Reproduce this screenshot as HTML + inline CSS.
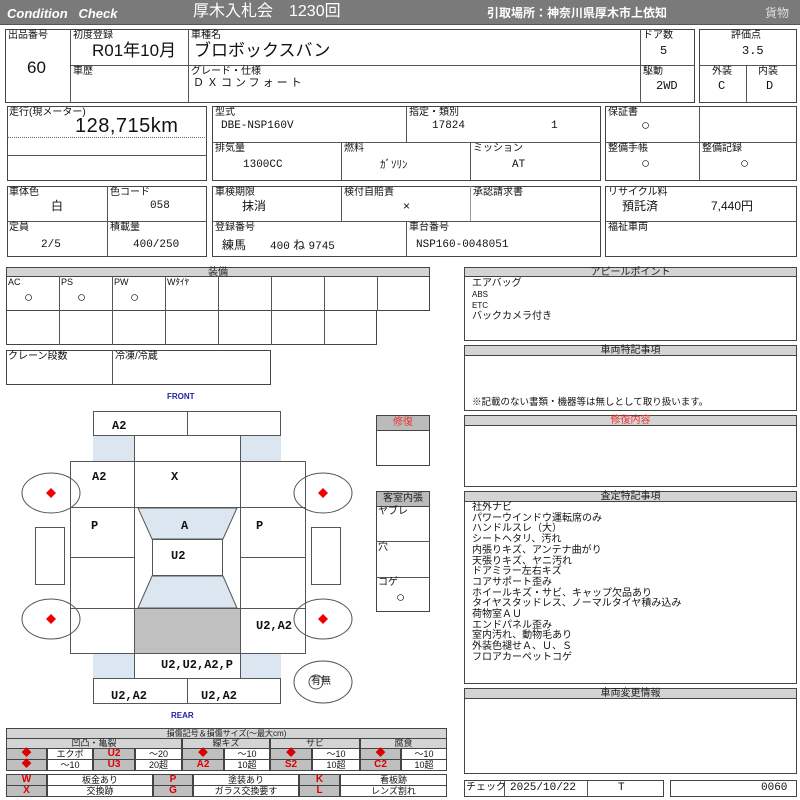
<!DOCTYPE html>
<html><head><meta charset="utf-8"><style>
*{margin:0;padding:0;box-sizing:border-box}
body{width:800px;height:800px;background:#fff;position:relative;overflow:hidden;font-family:"Liberation Sans","Noto Sans CJK JP",sans-serif;color:#111}
.b{position:absolute;border:1px solid #444}
.l{position:absolute;background:#555}
.t{position:absolute;font-size:10px;white-space:nowrap;line-height:1}
.v{position:absolute;font-size:12px;white-space:nowrap;line-height:1;font-family:"Liberation Mono","Noto Sans CJK JP",monospace}
.h{position:absolute;background:#d4d4d4;border:1px solid #444;font-size:10px;text-align:center;line-height:9px;color:#222}
.blue{position:absolute;background:#dce6f0}
.g{position:absolute;background:#bfbfbf;border:1px solid #444;color:#d00;font-weight:bold;font-size:10px;text-align:center;line-height:10px}
.w{position:absolute;border:1px solid #444;font-size:9px;text-align:center;line-height:10px}
.m{font-family:"Liberation Mono",monospace;font-weight:bold;font-size:12px}
.c{font-size:15px}
</style></head><body>
<div style="position:absolute;left:0;top:0;width:800px;height:25px;background:#7a7a7a;border-bottom:1px solid #555"></div>
<div class="t" style="left:7px;top:7px;color:#fff;font-style:italic;font-weight:bold;font-size:13px">Condition&nbsp;&nbsp;&nbsp;Check</div>
<div class="t" style="left:193px;top:4px;color:#fff;font-size:16px">厚木入札会　1230回</div>
<div class="t" style="left:487px;top:7px;color:#fff;font-size:12px;font-weight:bold">引取場所：神奈川県厚木市上依知</div>
<div class="t" style="left:765px;top:7px;color:#ddd;font-size:12px">貨物</div>

<div class="b" style="left:5px;top:29px;width:690px;height:74px"></div>
<div class="l" style="left:70px;top:29px;width:1px;height:74px"></div>
<div class="l" style="left:188px;top:29px;width:1px;height:74px"></div>
<div class="l" style="left:640px;top:29px;width:1px;height:74px"></div>
<div class="l" style="left:70px;top:65px;width:625px;height:1px"></div>
<div class="t" style="left:8px;top:31px">出品番号</div>
<div class="t" style="left:27px;top:59px;font-size:17px">60</div>
<div class="t" style="left:92px;top:42px;font-size:17px">R01年10月</div>
<div class="t" style="left:73px;top:31px">初度登録</div>
<div class="t" style="left:73px;top:67px">車歴</div>
<div class="t" style="left:191px;top:31px">車種名</div>
<div class="t" style="left:194px;top:42px;font-size:17px">ブロボックスバン</div>
<div class="t" style="left:191px;top:67px">グレード・仕様</div>
<div class="t" style="left:193px;top:78px;font-size:11px;letter-spacing:3px">ＤＸコンフォート</div>
<div class="t" style="left:643px;top:31px">ドア数</div>
<div class="v" style="left:660px;top:45px">5</div>
<div class="t" style="left:643px;top:67px">駆動</div>
<div class="v" style="left:656px;top:80px">2WD</div>
<div class="b" style="left:699px;top:29px;width:98px;height:74px"></div>
<div class="l" style="left:699px;top:65px;width:98px;height:1px"></div>
<div class="l" style="left:746px;top:65px;width:1px;height:38px"></div>
<div class="t" style="left:731px;top:31px">評価点</div>
<div class="v" style="left:742px;top:45px">3.5</div>
<div class="t" style="left:712px;top:67px">外装</div>
<div class="t" style="left:758px;top:67px">内装</div>
<div class="v" style="left:718px;top:80px">C</div>
<div class="v" style="left:766px;top:80px">D</div>

<div class="b" style="left:7px;top:106px;width:200px;height:75px"></div>
<div style="position:absolute;left:7px;top:137px;width:200px;border-top:1px dotted #666"></div>
<div class="l" style="left:7px;top:155px;width:200px;height:1px"></div>
<div class="t" style="left:9px;top:108px">走行(現メーター)</div>
<div class="t" style="left:75px;top:116px;font-size:20px;letter-spacing:0.5px">128,715km</div>
<div class="b" style="left:212px;top:106px;width:389px;height:75px"></div>
<div class="l" style="left:212px;top:142px;width:389px;height:1px"></div>
<div class="l" style="left:406px;top:106px;width:1px;height:36px"></div>
<div class="l" style="left:341px;top:142px;width:1px;height:39px"></div>
<div class="l" style="left:470px;top:142px;width:1px;height:39px"></div>
<div class="t" style="left:215px;top:108px">型式</div>
<div class="v" style="left:221px;top:121px;font-size:11px">DBE-NSP160V</div>
<div class="t" style="left:409px;top:108px">指定・類別</div>
<div class="v" style="left:432px;top:121px;font-size:11px">17824</div>
<div class="v" style="left:551px;top:121px;font-size:11px">1</div>
<div class="t" style="left:215px;top:144px">排気量</div>
<div class="v" style="left:243px;top:160px;font-size:11px">1300CC</div>
<div class="t" style="left:344px;top:144px">燃料</div>
<div class="t" style="left:380px;top:160px;font-size:11px">ｶﾞｿﾘﾝ</div>
<div class="t" style="left:473px;top:144px">ミッション</div>
<div class="v" style="left:512px;top:160px;font-size:11px">AT</div>
<div class="b" style="left:605px;top:106px;width:192px;height:75px"></div>
<div class="l" style="left:699px;top:106px;width:1px;height:75px"></div>
<div class="l" style="left:605px;top:142px;width:192px;height:1px"></div>
<div class="t" style="left:608px;top:108px">保証書</div>
<div class="t c" style="left:641px;top:118px">○</div>
<div class="t" style="left:608px;top:144px">整備手帳</div>
<div class="t c" style="left:641px;top:156px">○</div>
<div class="t" style="left:702px;top:144px">整備記録</div>
<div class="t c" style="left:740px;top:156px">○</div>

<div class="b" style="left:7px;top:186px;width:200px;height:71px"></div>
<div class="l" style="left:107px;top:186px;width:1px;height:71px"></div>
<div class="l" style="left:7px;top:221px;width:200px;height:1px"></div>
<div class="t" style="left:9px;top:188px">車体色</div>
<div class="t" style="left:51px;top:200px;font-size:12px">白</div>
<div class="t" style="left:110px;top:188px">色コード</div>
<div class="v" style="left:150px;top:201px;font-size:11px">058</div>
<div class="t" style="left:9px;top:223px">定員</div>
<div class="v" style="left:41px;top:240px;font-size:11px">2/5</div>
<div class="t" style="left:110px;top:223px">積載量</div>
<div class="v" style="left:133px;top:240px;font-size:11px">400/250</div>
<div class="b" style="left:212px;top:186px;width:389px;height:71px"></div>
<div class="l" style="left:212px;top:221px;width:389px;height:1px"></div>
<div class="l" style="left:341px;top:186px;width:1px;height:35px"></div>
<div class="l" style="left:470px;top:186px;width:1px;height:35px;background:#999"></div>
<div class="l" style="left:406px;top:221px;width:1px;height:36px"></div>
<div class="t" style="left:215px;top:188px">車検期限</div>
<div class="t" style="left:242px;top:200px;font-size:12px">抹消</div>
<div class="t" style="left:344px;top:188px">検付自賠責</div>
<div class="t" style="left:403px;top:200px;font-size:12px">×</div>
<div class="t" style="left:473px;top:188px">承認請求書</div>
<div class="t" style="left:215px;top:223px">登録番号</div>
<div class="t" style="left:222px;top:239px;font-size:12px">練馬　　<span style="font-size:11px;font-family:'Liberation Mono',monospace">400</span> ね <span style="font-size:11px;font-family:'Liberation Mono',monospace">9745</span></div>
<div class="t" style="left:409px;top:223px">車台番号</div>
<div class="v" style="left:416px;top:240px;font-size:11px">NSP160-0048051</div>
<div class="b" style="left:605px;top:186px;width:192px;height:71px"></div>
<div class="l" style="left:605px;top:221px;width:192px;height:1px"></div>
<div class="t" style="left:608px;top:188px">リサイクル料</div>
<div class="t" style="left:622px;top:200px;font-size:12px">預託済</div>
<div class="t" style="left:711px;top:200px;font-size:12px">7,440円</div>
<div class="t" style="left:608px;top:223px">福祉車両</div>

<div class="h" style="left:6px;top:267px;width:424px;height:10px">装備</div>
<div class="b" style="left:6px;top:276px;width:424px;height:35px"></div>
<div class="b" style="left:6px;top:310px;width:371px;height:35px"></div>
<div class="l" style="left:59px;top:276px;width:1px;height:69px"></div>
<div class="l" style="left:112px;top:276px;width:1px;height:69px"></div>
<div class="l" style="left:165px;top:276px;width:1px;height:69px"></div>
<div class="l" style="left:218px;top:276px;width:1px;height:69px"></div>
<div class="l" style="left:271px;top:276px;width:1px;height:69px"></div>
<div class="l" style="left:324px;top:276px;width:1px;height:69px"></div>
<div class="l" style="left:377px;top:276px;width:1px;height:35px"></div>
<div class="t" style="left:8px;top:278px;font-size:9px">AC</div>
<div class="t" style="left:61px;top:278px;font-size:9px">PS</div>
<div class="t" style="left:114px;top:278px;font-size:9px">PW</div>
<div class="t" style="left:167px;top:278px;font-size:9px">Wﾀｲﾔ</div>
<div class="t c" style="left:24px;top:290px">○</div>
<div class="t c" style="left:77px;top:290px">○</div>
<div class="t c" style="left:130px;top:290px">○</div>
<div class="b" style="left:6px;top:350px;width:265px;height:35px"></div>
<div class="l" style="left:112px;top:350px;width:1px;height:35px"></div>
<div class="t" style="left:8px;top:352px">クレーン段数</div>
<div class="t" style="left:115px;top:352px">冷凍/冷蔵</div>

<div class="t" style="left:167px;top:393px;font-size:8px;font-weight:bold;color:#22a">FRONT</div>
<div class="t" style="left:171px;top:712px;font-size:8px;font-weight:bold;color:#22a">REAR</div>
<div class="blue" style="left:93px;top:435px;width:41px;height:26px"></div>
<div class="blue" style="left:240px;top:435px;width:41px;height:26px"></div>
<div class="blue" style="left:93px;top:653px;width:41px;height:25px"></div>
<div class="blue" style="left:240px;top:653px;width:41px;height:25px"></div>
<div style="position:absolute;left:134px;top:608px;width:106px;height:45px;background:#c0c0c0"></div>
<svg style="position:absolute;left:0;top:0" width="460" height="720">
<g fill="none" stroke="#555" stroke-width="1">
<rect x="93.5" y="411.5" width="187" height="24"/>
<line x1="187.5" y1="411" x2="187.5" y2="435"/>
<rect x="70.5" y="461.5" width="235" height="192"/>
<line x1="134.5" y1="435" x2="134.5" y2="678"/>
<line x1="240.5" y1="435" x2="240.5" y2="678"/>
<line x1="70" y1="507.5" x2="305" y2="507.5"/>
<line x1="70" y1="557.5" x2="134" y2="557.5"/>
<line x1="240" y1="557.5" x2="305" y2="557.5"/>
<line x1="70" y1="608.5" x2="305" y2="608.5"/>
<rect x="93.5" y="678.5" width="187" height="25"/>
<line x1="187.5" y1="678" x2="187.5" y2="704"/>
<rect x="152.5" y="539.5" width="70" height="36"/>
<ellipse cx="51" cy="493" rx="29" ry="20"/>
<ellipse cx="323" cy="493" rx="29" ry="20"/>
<ellipse cx="51" cy="619" rx="29" ry="20"/>
<ellipse cx="323" cy="619" rx="29" ry="20"/>
<ellipse cx="323" cy="682" rx="29" ry="21"/>
<rect x="35.5" y="527.5" width="29" height="57"/>
<rect x="311.5" y="527.5" width="29" height="57"/>
<circle cx="316" cy="682" r="7"/>
</g>
<polygon points="138,508 237,508 223,539 152,539" fill="#dce6f0" stroke="#555"/>
<polygon points="152,576 223,576 237,608 138,608" fill="#dce6f0" stroke="#555"/>
<g fill="#e00">
<polygon points="51,488 56,493 51,498 46,493"/>
<polygon points="323,488 328,493 323,498 318,493"/>
<polygon points="51,614 56,619 51,624 46,619"/>
<polygon points="323,614 328,619 323,624 318,619"/>
</g>
</svg>
<div class="t m" style="left:112px;top:420px">A2</div>
<div class="t m" style="left:92px;top:471px">A2</div>
<div class="t m" style="left:171px;top:471px">X</div>
<div class="t m" style="left:91px;top:520px">P</div>
<div class="t m" style="left:181px;top:520px">A</div>
<div class="t m" style="left:256px;top:520px">P</div>
<div class="t m" style="left:171px;top:550px">U2</div>
<div class="t m" style="left:256px;top:620px">U2,A2</div>
<div class="t m" style="left:161px;top:659px">U2,U2,A2,P</div>
<div class="t m" style="left:111px;top:690px">U2,A2</div>
<div class="t m" style="left:201px;top:690px">U2,A2</div>
<div class="t" style="left:311px;top:677px;font-size:10px">有無</div>

<div class="h" style="left:376px;top:415px;width:54px;height:16px;background:#bbb;color:#e33;line-height:14px">修復</div>
<div class="b" style="left:376px;top:430px;width:54px;height:36px"></div>
<div class="h" style="left:376px;top:491px;width:54px;height:16px;background:#bbb;line-height:14px">客室内張</div>
<div class="b" style="left:376px;top:506px;width:54px;height:106px"></div>
<div class="l" style="left:376px;top:541px;width:54px;height:1px"></div>
<div class="l" style="left:376px;top:577px;width:54px;height:1px"></div>
<div class="t" style="left:378px;top:507px">ヤブレ</div>
<div class="t" style="left:378px;top:543px">穴</div>
<div class="t" style="left:378px;top:578px">コゲ</div>
<div class="t c" style="left:396px;top:590px">○</div>

<div class="h" style="left:464px;top:267px;width:333px;height:10px">アピールポイント</div>
<div class="b" style="left:464px;top:276px;width:333px;height:65px"></div>
<div class="t" style="left:472px;top:278px;line-height:11px">エアバッグ<br><span style="font-size:8px">ABS</span><br><span style="font-size:8px">ETC</span><br>バックカメラ付き</div>
<div class="h" style="left:464px;top:345px;width:333px;height:11px">車両特記事項</div>
<div class="b" style="left:464px;top:355px;width:333px;height:56px"></div>
<div class="t" style="left:472px;top:398px;font-size:9.5px">※記載のない書類・機器等は無しとして取り扱います。</div>
<div class="h" style="left:464px;top:415px;width:333px;height:11px;color:#e33">修復内容</div>
<div class="b" style="left:464px;top:425px;width:333px;height:62px"></div>
<div class="h" style="left:464px;top:491px;width:333px;height:11px">査定特記事項</div>
<div class="b" style="left:464px;top:501px;width:333px;height:183px"></div>
<div class="t" style="left:472px;top:503px;font-size:10px;line-height:10.7px">社外ナビ<br>パワーウインドウ運転席のみ<br>ハンドルスレ（大）<br>シートヘタリ、汚れ<br>内張りキズ、アンテナ曲がり<br>天張りキズ、ヤニ汚れ<br>ドアミラー左右キズ<br>コアサポート歪み<br>ホイールキズ・サビ、キャップ欠品あり<br>タイヤスタッドレス、ノーマルタイヤ積み込み<br>荷物室ＡＵ<br>エンドパネル歪み<br>室内汚れ、動物毛あり<br>外装色褪せＡ、Ｕ、Ｓ<br>フロアカーペットコゲ</div>
<div class="h" style="left:464px;top:688px;width:333px;height:11px">車両変更情報</div>
<div class="b" style="left:464px;top:698px;width:333px;height:76px"></div>
<div class="b" style="left:464px;top:780px;width:200px;height:17px"></div>
<div class="l" style="left:504px;top:780px;width:1px;height:17px"></div>
<div class="l" style="left:587px;top:780px;width:1px;height:17px"></div>
<div class="t" style="left:466px;top:783px">チェック</div>
<div class="v" style="left:510px;top:783px;font-size:11px">2025/10/22</div>
<div class="v" style="left:618px;top:783px;font-size:11px">T</div>
<div class="b" style="left:670px;top:780px;width:127px;height:17px"></div>
<div class="v" style="left:761px;top:783px;font-size:11px">0060</div>

<div class="h" style="left:6px;top:728px;width:441px;height:11px;font-size:8px">損傷記号＆損傷サイズ(～最大cm)</div>
<div class="h" style="left:6px;top:738px;width:176px;height:11px;font-size:9px">凹凸・亀裂</div>
<div class="h" style="left:182px;top:738px;width:88px;height:11px;font-size:9px">線キズ</div>
<div class="h" style="left:270px;top:738px;width:90px;height:11px;font-size:9px">サビ</div>
<div class="h" style="left:360px;top:738px;width:87px;height:11px;font-size:9px">腐食</div>
<div class="g" style="left:6px;top:748px;width:41px;height:12px">◆</div>
<div class="w" style="left:47px;top:748px;width:46px;height:12px">エクボ</div>
<div class="g" style="left:93px;top:748px;width:42px;height:12px">U2</div>
<div class="w" style="left:135px;top:748px;width:47px;height:12px">～20</div>
<div class="g" style="left:182px;top:748px;width:42px;height:12px">◆</div>
<div class="w" style="left:224px;top:748px;width:46px;height:12px">～10</div>
<div class="g" style="left:270px;top:748px;width:42px;height:12px">◆</div>
<div class="w" style="left:312px;top:748px;width:48px;height:12px">～10</div>
<div class="g" style="left:360px;top:748px;width:41px;height:12px">◆</div>
<div class="w" style="left:401px;top:748px;width:46px;height:12px">～10</div>
<div class="g" style="left:6px;top:759px;width:41px;height:12px">◆</div>
<div class="w" style="left:47px;top:759px;width:46px;height:12px">～10</div>
<div class="g" style="left:93px;top:759px;width:42px;height:12px">U3</div>
<div class="w" style="left:135px;top:759px;width:47px;height:12px">20超</div>
<div class="g" style="left:182px;top:759px;width:42px;height:12px">A2</div>
<div class="w" style="left:224px;top:759px;width:46px;height:12px">10超</div>
<div class="g" style="left:270px;top:759px;width:42px;height:12px">S2</div>
<div class="w" style="left:312px;top:759px;width:48px;height:12px">10超</div>
<div class="g" style="left:360px;top:759px;width:41px;height:12px">C2</div>
<div class="w" style="left:401px;top:759px;width:46px;height:12px">10超</div>
<div class="g" style="left:6px;top:774px;width:41px;height:12px">W</div>
<div class="w" style="left:47px;top:774px;width:106px;height:12px">板金あり</div>
<div class="g" style="left:153px;top:774px;width:40px;height:12px">P</div>
<div class="w" style="left:193px;top:774px;width:106px;height:12px">塗装あり</div>
<div class="g" style="left:299px;top:774px;width:41px;height:12px">K</div>
<div class="w" style="left:340px;top:774px;width:107px;height:12px">看板跡</div>
<div class="g" style="left:6px;top:785px;width:41px;height:12px">X</div>
<div class="w" style="left:47px;top:785px;width:106px;height:12px">交換跡</div>
<div class="g" style="left:153px;top:785px;width:40px;height:12px">G</div>
<div class="w" style="left:193px;top:785px;width:106px;height:12px">ガラス交換要す</div>
<div class="g" style="left:299px;top:785px;width:41px;height:12px">L</div>
<div class="w" style="left:340px;top:785px;width:107px;height:12px">レンズ割れ</div>
</body></html>
